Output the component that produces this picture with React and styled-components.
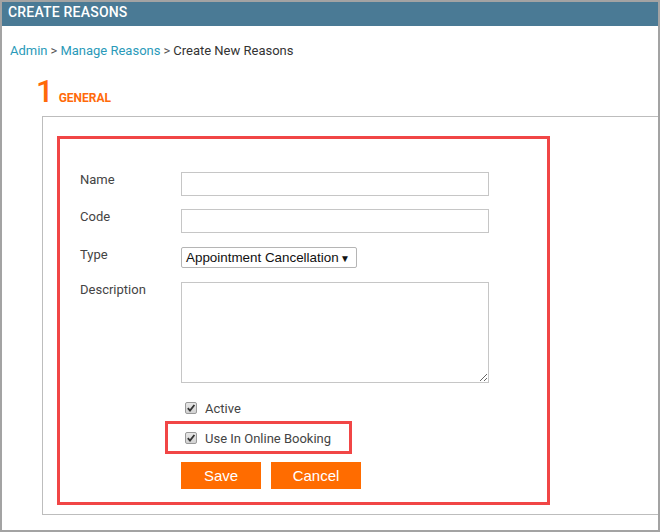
import React from "react";
import styled, { createGlobalStyle } from "styled-components";

const Global = createGlobalStyle`
    html, body { margin: 0; padding: 0; background: #fff; }
    * { box-sizing: border-box; }
`;

const Frame = styled.div`
    width: 660px;
    height: 532px;
    border: 2px solid #a3a3a3;
    overflow: hidden;
    background: #fff;
    font-family: Roboto, "Liberation Sans", sans-serif;
`;

const Header = styled.div`
    height: 24px;
    background: #4a7a95;
    color: #fff;
    font-size: 14px;
    font-weight: 500;
    letter-spacing: 0.2px;
    line-height: 20px;
    padding-left: 6px;
`;

const Crumbs = styled.div`
    margin-top: 17px;
    padding-left: 8px;
    font-size: 13px;
    line-height: 16px;
    color: #333;
    a { color: #2a9ab9; text-decoration: none; }
    span.sep { color: #555; margin: 0 3px; }
`;

const Heading = styled.div`
    display: flex;
    align-items: baseline;
    margin-top: 17px;
    padding-left: 34px;
    height: 31px;
    line-height: 31px;
    color: #ff6a0a;
`;

const StepNo = styled.span`
    font-size: 31px;
    font-weight: 500;
    margin-right: 5px;
`;

const StepTitle = styled.span`
    font-size: 12px;
    font-weight: 700;
`;

const Panel = styled.div`
    margin: 9px -10px 0 40px;
    border: 1px solid #bdbdbd;
    padding: 19px 0 9px 14px;
`;

const Highlight = styled.div`
    border: 3px solid #f14646;
`;

const FormBox = styled(Highlight)`
    width: 493px;
    height: 369px;
    padding: 33px 0 0 20px;
`;

const Row = styled.div`
    display: grid;
    grid-template-columns: 101px auto;
    align-items: start;
    margin-top: ${(p) => p.$top || 0}px;
`;

const Label = styled.label`
    font-size: 13px;
    line-height: 16px;
    color: #444;
`;

const TextInput = styled.input`
    width: 308px;
    height: 24px;
    border: 1px solid #c6c6c6;
    margin: 0;
    padding: 2px 4px;
    font: 13px Roboto, sans-serif;
`;

const TextArea = styled.textarea`
    display: block;
    width: 308px;
    height: 101px;
    border: 1px solid #c6c6c6;
    margin: 0;
    padding: 4px;
    font: 13px Roboto, sans-serif;
`;

const Select = styled.div`
    width: 176px;
    height: 21px;
    border: 1px solid #b5b5b5;
    border-radius: 2px;
    display: flex;
    align-items: center;
    justify-content: space-between;
    padding: 0 6px 0 4px;
    font-family: "Liberation Sans", Arial, sans-serif;
    font-size: 13.4px;
    color: #111;
    .arrow { font-size: 10px; margin-top: 1px; }
`;

const CheckRow = styled.div`
    display: flex;
    align-items: center;
    height: 16px;
    padding-left: ${(p) => p.$indent}px;
    font-size: 13px;
    color: #444;
`;

const Box = styled.span`
    width: 12px;
    height: 12px;
    border: 1px solid #999;
    border-radius: 2px;
    background: linear-gradient(#e6e6e6, #d2d2d2);
    margin-right: 8px;
    display: inline-flex;
    align-items: center;
    justify-content: center;
`;

const BookingBox = styled(Highlight)`
    width: 187px;
    height: 33px;
    margin-left: -16px;
    padding: 6px 0 0 17px;
`;

const Buttons = styled.div`
    display: flex;
    gap: 10px;
`;

const Button = styled.button`
    width: ${(p) => p.$w}px;
    height: 27px;
    border: 0;
    margin: 0;
    background: #ff6c00;
    color: #fff;
    font-family: "Liberation Sans", Arial, sans-serif;
    font-size: 15px;
    cursor: pointer;
`;

const Check = ({ label, indent = 4 }) => (
    <CheckRow $indent={indent}>
        <Box>
            <svg width="10" height="10" viewBox="0 0 10 10">
                <path d="M1.8 5.2 L4 7.6 L8.4 2" fill="none" stroke="#333" strokeWidth="1.8" />
            </svg>
        </Box>
        {label}
    </CheckRow>
);

export default function App() {
    return (
        <>
            <Global />
            <Frame>
                <Header>CREATE REASONS</Header>
                <Crumbs>
                    <a href="#">Admin</a><span className="sep">&gt;</span>
                    <a href="#">Manage Reasons</a><span className="sep">&gt;</span>
                    Create New Reasons
                </Crumbs>
                <Heading>
                    <StepNo>1</StepNo>
                    <StepTitle>GENERAL</StepTitle>
                </Heading>
                <Panel>
                    <FormBox>
                        <Row>
                            <Label>Name</Label>
                            <TextInput />
                        </Row>
                        <Row $top={13}>
                            <Label>Code</Label>
                            <TextInput />
                        </Row>
                        <Row $top={14}>
                            <Label>Type</Label>
                            <Select>
                                <span>Appointment Cancellation</span>
                                <span className="arrow">▼</span>
                            </Select>
                        </Row>
                        <Row $top={14}>
                            <Label>Description</Label>
                            <TextArea />
                        </Row>
                        <Row $top={17}>
                            <span />
                            <Check label="Active" />
                        </Row>
                        <Row $top={5}>
                            <span />
                            <BookingBox>
                                <Check label="Use In Online Booking" indent={0} />
                            </BookingBox>
                        </Row>
                        <Row $top={8}>
                            <span />
                            <Buttons>
                                <Button $w={80}>Save</Button>
                                <Button $w={90}>Cancel</Button>
                            </Buttons>
                        </Row>
                    </FormBox>
                </Panel>
            </Frame>
        </>
    );
}
